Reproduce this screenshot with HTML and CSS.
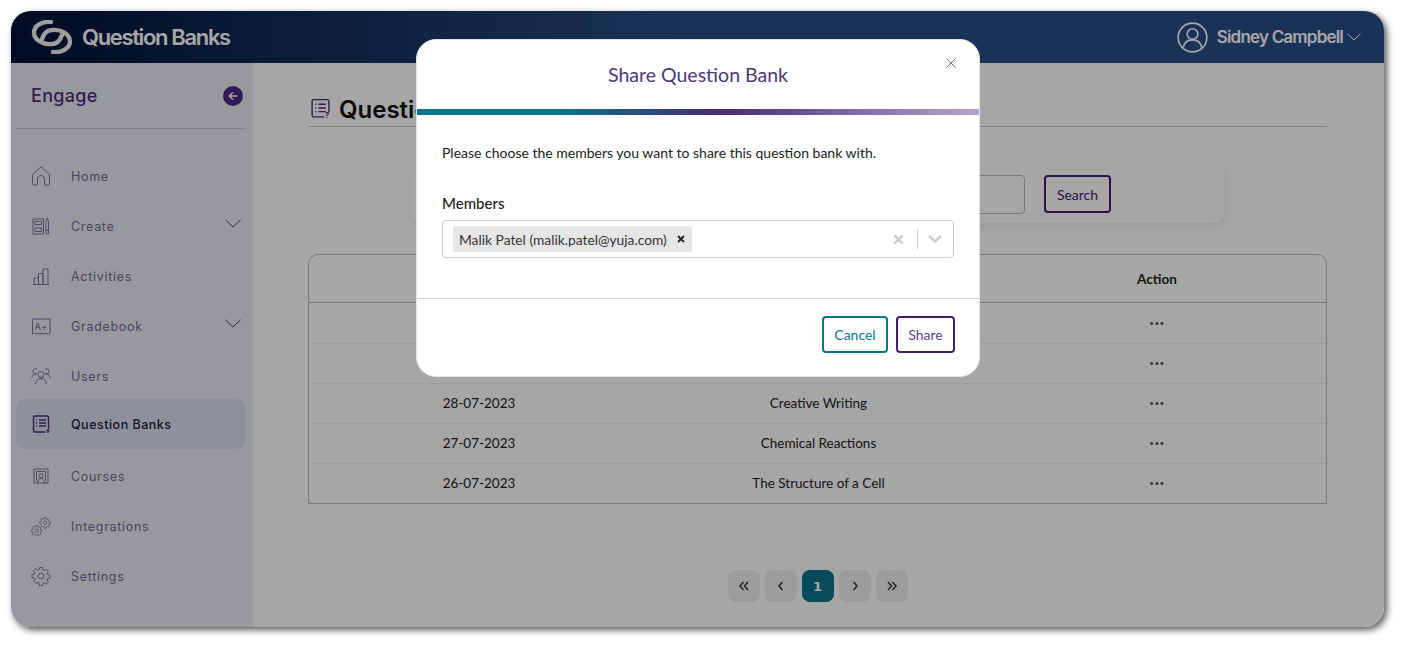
FILE: index.html
```html
<!DOCTYPE html>
<html lang="en">
<head>
<meta charset="utf-8">
<title>Question Banks</title>
<link rel="stylesheet" href="styles.css">
</head>
<body>
<div class="app">
  <header class="topbar">
    <div class="brand">
      <svg class="logo" viewBox="0 0 42 34" fill="none" stroke="currentColor" stroke-width="4.4" stroke-linecap="round">
        <path d="M31 15C29 21 25 24 21 24 12 25 3 20 3 12.5 3 6 11 1 20 2"/>
        <path d="M11 19C13 13 17 10 21 10 30 9 39 14 39 21.5 39 28 31 33 22 32"/>
      </svg>
      <span class="brand-name">Question Banks</span>
    </div>
    <div class="user">
      <svg class="user-icon" viewBox="0 0 32 32" fill="none" stroke="currentColor" stroke-width="1.7">
        <circle cx="16" cy="16" r="14.8"/>
        <circle cx="16" cy="12.5" r="5.5"/>
        <path d="M6.5 26.500c1-5.500 4.500-8 9.500-8s8.500 2.500 9.500 8"/>
      </svg>
      <span class="user-name">Sidney Campbell</span>
      <svg class="user-chevron" viewBox="0 0 14 8" fill="none" stroke="currentColor" stroke-width="1"><path d="M.5.8 7 7l6.500-6.200"/></svg>
    </div>
  </header>

  <div class="workspace">
    <aside class="sidebar">
      <div class="side-head">
        <span class="side-title">Engage</span>
        <span class="collapse">
          <svg viewBox="0 0 12 12" fill="none" stroke="currentColor" stroke-width="1.4" stroke-linecap="round" stroke-linejoin="round"><path d="M10 6H2.200M5.500 2.700 2.200 6l3.300 3.300"/></svg>
        </span>
      </div>
      <nav class="nav">
        <a class="nav-item">
          <svg class="nav-icon" viewBox="0 0 20 20"><path d="M1.500 8.500 10 1l8.500 7.500v9a1.500 1.500 0 0 1-1.500 1.500h-3.500v-6a3.500 3.500 0 0 0-7 0v6H3a1.500 1.500 0 0 1-1.500-1.500z"/></svg>
          <span>Home</span>
        </a>
        <a class="nav-item">
          <svg class="nav-icon" viewBox="0 0 20 20"><path d="M2 3h10.500v15H2zM4 5.500h6.500v3H4zM4 12h6.500v3.500H4zM15 5.500 16.300 2l1.200 3.500V17a1.200 1.200 0 0 1-2.500 0zM15 14.500h2.500"/></svg>
          <span>Create</span>
          <svg class="nav-chevron" viewBox="0 0 16 9"><path d="M.5.8 8 8 15.500.8"/></svg>
        </a>
        <a class="nav-item">
          <svg class="nav-icon" viewBox="0 0 20 20"><path d="M3 18.500V12h4.500v6.500M7.500 18.500V7.500h4.500v11M12 18.500V3h5v15.500M2 18.500h16"/></svg>
          <span>Activities</span>
        </a>
        <a class="nav-item">
          <svg class="nav-icon" viewBox="0 0 20 20"><path d="M1.500 3h17.500v14c-1.500 1.200-2.500 1.200-4 0-1.500 1.200-2.500 1.200-4 0-1.500 1.200-2.500 1.200-4 0-1.500 1.200-2.500 1.200-4 0-.8.500-1 .8-1.500 1z"/><text class="icon-text" x="10.200" y="13.500" text-anchor="middle">A+</text></svg>
          <span>Gradebook</span>
          <svg class="nav-chevron" viewBox="0 0 16 9"><path d="M.5.8 8 8 15.500.8"/></svg>
        </a>
        <a class="nav-item">
          <svg class="nav-icon" viewBox="0 0 20 20"><circle cx="10" cy="8.500" r="3"/><path d="M4.500 18c.3-3.500 2.500-5.500 5.500-5.500s5.200 2 5.500 5.500M6 7.600a2.600 2.600 0 1 1 0-4.400M1 12c.2-2.500 1.500-3.800 4-4.200M14 7.600a2.600 2.600 0 1 0 0-4.400M19 12c-.2-2.500-1.500-3.800-4-4.200"/></svg>
          <span>Users</span>
        </a>
        <a class="nav-item is-active">
          <svg class="nav-icon" viewBox="0 0 20 20"><path d="M14.500 18H4a1.500 1.500 0 0 1-1.500-1.500v-13A1.500 1.500 0 0 1 4 2h12a1.500 1.500 0 0 1 1.500 1.500V15M5 6h1M8 6h7M5 9h1M8 9h7M5 12h1M8 12h7M15.500 16.500h3M17 16.500V19"/></svg>
          <span>Question Banks</span>
        </a>
        <a class="nav-item">
          <svg class="nav-icon" viewBox="0 0 20 20"><path d="M3 3h14v14H3zM5.500 14.500V5.500h9v9M6.500 17c0-3 1.300-4.500 3.500-4.500s3.500 1.500 3.500 4.500"/><circle cx="10" cy="9.800" r="2"/></svg>
          <span>Courses</span>
        </a>
        <a class="nav-item">
          <svg class="nav-icon" viewBox="0 0 20 20">
            <g transform="translate(8.500 .5) scale(.56)"><path class="thin" d="M8.500 2h3l.5 2.400 1.600.7 2.100-1.300 2 2.100-1.300 2 .7 1.600 2.400.5v3l-2.400.5-.7 1.600 1.300 2.100-2 2-2.100-1.300-1.600.7-.5 2.400h-3L8 18l-1.600-.7-2.100 1.300-2-2 1.300-2.100L2.900 12.900.5 12.400v-3l2.400-.5.7-1.600-1.300-2 2-2.100 2.100 1.300L8 4.400z"/><circle class="thin" cx="10" cy="11" r="3"/></g>
            <g transform="translate(0 8.500) scale(.56)"><path class="thin" d="M8.500 2h3l.5 2.400 1.600.7 2.100-1.300 2 2.100-1.300 2 .7 1.600 2.400.5v3l-2.400.5-.7 1.600 1.300 2.100-2 2-2.100-1.300-1.600.7-.5 2.400h-3L8 18l-1.600-.7-2.100 1.300-2-2 1.300-2.100L2.900 12.900.5 12.400v-3l2.400-.5.7-1.600-1.300-2 2-2.100 2.100 1.300L8 4.400z"/><circle class="thin" cx="10" cy="11" r="3"/></g>
          </svg>
          <span>Integrations</span>
        </a>
        <a class="nav-item">
          <svg class="nav-icon" viewBox="0 0 20 20"><circle cx="10" cy="10" r="3"/><path d="M8.500 2h3l.5 2.400 1.600.7 2.100-1.300 2 2.100-1.300 2 .7 1.600 2.400.5v3l-2.400.5-.7 1.600 1.300 2.100-2 2-2.100-1.300-1.600.7-.5 2.400h-3L8 18l-1.600-.7-2.100 1.300-2-2 1.300-2.100L2.900 12.900.5 12.400v-3l2.400-.5.7-1.600-1.300-2 2-2.100 2.100 1.300L8 4.400z" transform="translate(.4 -.4) scale(.96)"/></svg>
          <span>Settings</span>
        </a>
      </nav>
    </aside>

    <main class="main">
      <h1 class="page-title">
        <svg class="title-icon" viewBox="0 0 20 20"><path d="M13.500 18H3.500A1.500 1.500 0 0 1 2 16.500V3a1.500 1.500 0 0 1 1.500-1.500h13A1.500 1.500 0 0 1 18 3v10.500M5 6h1M8 6h7M5 9.500h1M8 9.500h7M5 13h1M8 13h7"/><text class="title-mark" x="16.300" y="19.500" text-anchor="middle">?</text></svg>
        <span>Question Banks</span>
      </h1>
      <div class="search-card">
        <input class="search-input" type="text" aria-label="Search">
        <button class="btn btn-search">Search</button>
      </div>
      <div class="table">
        <div class="row head"><span></span><span></span><span>Action</span></div>
        <div class="row"><span></span><span></span><span class="dots">•••</span></div>
        <div class="row"><span></span><span></span><span class="dots">•••</span></div>
        <div class="row"><span>28-07-2023</span><span>Creative Writing</span><span class="dots">•••</span></div>
        <div class="row"><span>27-07-2023</span><span>Chemical Reactions</span><span class="dots">•••</span></div>
        <div class="row"><span>26-07-2023</span><span>The Structure of a Cell</span><span class="dots">•••</span></div>
      </div>
      <div class="pager">
        <button class="page" aria-label="First"><svg viewBox="0 0 12 10"><path d="M5.500 1 2 5l3.500 4M10 1 6.500 5l3.500 4"/></svg></button>
        <button class="page" aria-label="Previous"><svg viewBox="0 0 12 10"><path d="M7.500 1 4 5l3.500 4"/></svg></button>
        <button class="page is-current">1</button>
        <button class="page" aria-label="Next"><svg viewBox="0 0 12 10"><path d="M4.500 1 8 5 4.500 9"/></svg></button>
        <button class="page" aria-label="Last"><svg viewBox="0 0 12 10"><path d="M2 1l3.500 4L2 9M6.500 1 10 5 6.500 9"/></svg></button>
      </div>
    </main>
  </div>

  <div class="backdrop"></div>

  <section class="modal">
    <div class="modal-head">
      <h2 class="modal-title">Share Question Bank</h2>
      <svg class="modal-close" viewBox="0 0 10 10" fill="none" stroke="currentColor" stroke-width=".8"><path d="M.5.5l9 9M9.500.5l-9 9"/></svg>
    </div>
    <div class="modal-rule"></div>
    <div class="modal-body">
      <p class="modal-text">Please choose the members you want to share this question bank with.</p>
      <label class="field-label">Members</label>
      <div class="select">
        <span class="chip">
          <span class="chip-text">Malik Patel (malik.patel@yuja.com)</span>
          <svg class="chip-x" viewBox="0 0 8 8" fill="none" stroke="currentColor" stroke-width="1.8"><path d="M1 1l6 6M7 1 1 7"/></svg>
        </span>
        <svg class="sel-x" viewBox="0 0 12 12" fill="none" stroke="currentColor" stroke-width="2.6"><path d="M1.500 1.500l9 9M10.500 1.500l-9 9"/></svg>
        <span class="sel-sep"></span>
        <svg class="sel-down" viewBox="0 0 14 8" fill="none" stroke="currentColor" stroke-width="2.4"><path d="M1 1l6 5.500L13 1"/></svg>
      </div>
    </div>
    <div class="modal-foot">
      <button class="btn btn-cancel">Cancel</button>
      <button class="btn btn-share">Share</button>
    </div>
  </section>
</div>
</body>
</html>
```

FILE: styles.css
```css
* { box-sizing: border-box; }
html, body { margin: 0; height: 646px; overflow: hidden; background: #fff; }
body { padding: 11px 19px 19px 11px; font-family: "Lato", "Noto Sans", sans-serif; color: #222; }

.app {
  position: relative;
  height: 616px;
  display: flex;
  flex-direction: column;
  border-radius: 20px;
  background: #fff;
  box-shadow: 3px 3px 7px rgba(0, 0, 0, .65);
}

.topbar {
  height: 52px;
  flex: none;
  display: flex;
  align-items: center;
  justify-content: space-between;
  padding: 0 23px 0 20px;
  border-radius: 20px 20px 0 0;
  background: linear-gradient(90deg, #001237 0%, #2a4e87 50%, #2a4e87 100%);
  color: #fff;
}
.brand { display: flex; align-items: center; gap: 9px; }
.logo { width: 42px; height: 34px; color: #f2f2f2; }
.brand-name { font: 600 22px/1 "Inter", sans-serif; letter-spacing: -1.35px; color: #fff; }
.user { display: flex; align-items: center; }
.user-icon { width: 31px; height: 31px; margin-right: 9px; }
.user-name { font: 600 17px/1 "Inter", sans-serif; letter-spacing: -.8px; padding-top: 1px; }
.user-chevron { width: 14px; height: 8px; margin-left: 4px; }

.workspace { flex: 1; display: flex; min-height: 0; }

.sidebar {
  width: 242px;
  flex: none;
  padding: 0 7px 0 5px;
  border-radius: 0 0 0 20px;
  background: #eaebf3;
  box-shadow: 1px 0 3px rgba(0, 0, 0, .12);
}
.side-head {
  height: 66px;
  display: flex;
  align-items: center;
  justify-content: space-between;
  padding: 0 3px 0 15px;
  border-bottom: 1px solid #c9c8d6;
}
.side-title { font: 500 18px/1 "Inter", sans-serif; letter-spacing: .3px; color: #4a2f7a; }
.collapse {
  width: 20px; height: 20px;
  display: flex; align-items: center; justify-content: center;
  border-radius: 50%;
  background: #4a2a82;
  color: #fff;
}
.collapse svg { width: 12px; height: 12px; }

.nav { padding-top: 22px; display: flex; flex-direction: column; }
.nav-item {
  height: 50px;
  display: flex;
  align-items: center;
  padding: 0 5px 0 15px;
  border-radius: 10px;
  font: 400 12.5px/1 "Inter", sans-serif;
  letter-spacing: .7px;
  color: #77688f;
}
.nav-item span { flex: 1; padding-top: 2px; }
.nav-item.is-active {
  margin: -2px 0 2px;
  background: #dadeee;
  color: #1f1a3a;
  font-weight: 500;
  letter-spacing: .5px;
}
.nav-icon {
  width: 20px; height: 20px;
  margin-right: 20px;
  flex: none;
  fill: none;
  stroke: #7a7299;
  stroke-width: 1;
}
.is-active .nav-icon { stroke: #4a2f7a; stroke-width: 1.4; }
.nav-icon .thin { vector-effect: non-scaling-stroke; stroke-width: .8; }
.icon-text { font: 500 9px "Inter", sans-serif; fill: #7a7299; stroke: none; }
.nav-chevron { width: 16px; height: 9px; margin-top: -5px; fill: none; stroke: #4c4a5c; stroke-width: 1; }

.main {
  flex: 1;
  min-width: 0;
  display: flex;
  flex-direction: column;
  padding: 0 57px 0 55px;
  background: #fff;
  border-radius: 0 0 20px 0;
}
.page-title {
  margin: 30px 0 0;
  height: 34px;
  display: flex;
  align-items: flex-start;
  gap: 8px;
  padding: 5px 0 0 2px;
  font: 600 24px/1 "Inter", sans-serif;
  color: #111;
  border-bottom: 1px solid #c9c9c9;
  white-space: nowrap;
}
.title-icon { width: 21px; height: 21px; fill: none; stroke: #4a2f7a; stroke-width: 1.3; }
.title-mark { font: 700 7px "Inter", sans-serif; fill: #4a2f7a; stroke: none; }

.search-card {
  margin: 38px 103px 0;
  height: 58px;
  display: flex;
  align-items: flex-start;
  justify-content: flex-end;
  gap: 19px;
  padding: 10px 113px 0 0;
  border-radius: 10px;
  background: #fff;
  box-shadow: 2px 4px 10px rgba(0, 0, 0, .08);
}
.search-input {
  width: 400px;
  height: 39px;
  border: 1px solid #bbb;
  border-radius: 4px;
  background: #fff;
}
.btn {
  font: 400 14px/1 "Lato", sans-serif;
  background: #fff;
  border-radius: 4px;
  padding: 0;
}
.btn-search { width: 67px; height: 38px; padding-top: 2px; border: 2px solid #3d2170; color: #3d2170; }

.table {
  margin-top: 31px;
  border: 1px solid #bcbcbc;
  border-radius: 10px 10px 0 0;
}
.row {
  height: 40px;
  display: grid;
  grid-template-columns: 340px 339px 1fr;
  align-items: center;
  padding-bottom: 1px;
  text-align: center;
  font-size: 13.5px;
  color: #222;
  border-top: 1px solid #f0f0f0;
}
.row.head { height: 48px; padding-bottom: 0; border-top: 0; border-bottom: 1px solid #bcbcbc; font-weight: 700; }
.row.head + .row { border-top: 0; padding-bottom: 0; }
.dots { font-size: 8px; letter-spacing: .5px; color: #555; }

.pager { margin-top: 66px; display: flex; justify-content: center; gap: 5px; }
.page {
  width: 32px; height: 32px;
  display: flex; align-items: center; justify-content: center;
  border: 0;
  border-radius: 8px;
  background: #f0f0f0;
  color: #333;
  font: 700 13px/1 "DejaVu Sans", sans-serif;
  padding: 0;
}
.page svg { width: 12px; height: 10px; fill: none; stroke: #333; stroke-width: 1.5; }
.page.is-current { background: #087489; color: #fff; }

.backdrop {
  position: absolute;
  inset: 0;
  border-radius: 20px;
  background: rgba(0, 0, 0, .35);
}

.modal {
  position: absolute;
  left: 405px;
  top: 28px;
  width: 564px;
  height: 338px;
  display: flex;
  flex-direction: column;
  background: #fff;
  border: 1px solid #e6e6e6;
  border-radius: 20px;
}
.modal-head { height: 69px; flex: none; position: relative; text-align: center; }
.modal-title { margin: 0; padding-top: 23px; font: 400 19.5px/1.2 "Lato", sans-serif; color: #4a3a7a; }
.modal-close { position: absolute; right: 23px; top: 18px; width: 10px; height: 10px; color: #555; }
.modal-rule { height: 6px; flex: none; background: linear-gradient(90deg, #087489 0%, #087489 25%, #4a2a73 54%, #b7a4d0 100%); }
.modal-body { flex: 1; padding: 0 25px; border-bottom: 1px solid #d4d4d4; }
.modal-text { margin: 29px 0 0; font-size: 14px; line-height: 17px; color: #222; }
.field-label { display: block; margin-top: 33px; font-size: 15px; line-height: 18px; font-weight: 500; color: #222; }
.select {
  margin-top: 8px;
  height: 38px;
  display: flex;
  align-items: center;
  padding: 0 11px 0 10px;
  border: 1px solid #ccc;
  border-radius: 4px;
}
.chip {
  height: 26px;
  display: flex;
  align-items: center;
  padding: 0 6px;
  border-radius: 2px;
  background: #e6e6e6;
  margin-right: auto;
}
.chip-text { font-size: 13.8px; color: #333; margin-right: 10px; }
.chip-x { width: 8px; height: 8px; color: #222; margin-right: 1px; }
.sel-x { width: 11px; height: 11px; color: #ccc; }
.sel-sep { width: 1px; height: 20px; margin: 0 10px 0 13px; background: #ccc; }
.sel-down { width: 14px; height: 8px; color: #ccc; }

.modal-foot { height: 77px; flex: none; display: flex; justify-content: flex-end; align-items: flex-start; gap: 8px; padding: 17px 24px 0 0; }
.btn-cancel { width: 66px; height: 37px; border: 2px solid #087489; color: #087489; }
.btn-share { width: 59px; height: 37px; border: 2px solid #3d2170; color: #5d3f94; }
```
